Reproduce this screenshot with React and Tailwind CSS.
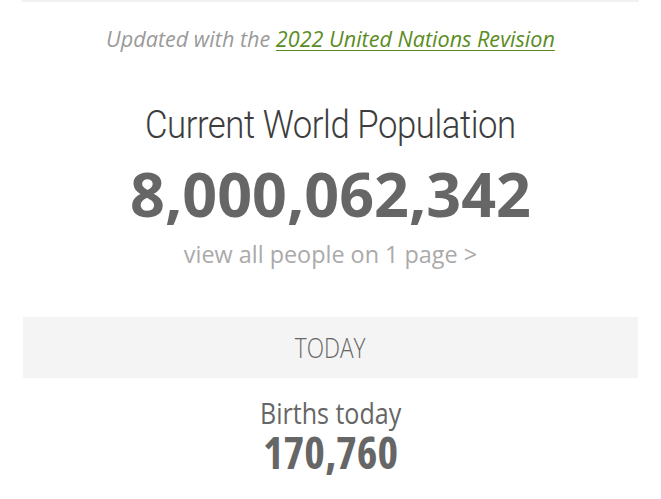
export default function App() {
  return (
    <div className="w-[661px] h-[499px] bg-white overflow-hidden font-['Open_Sans',sans-serif]">
      <div className="mx-[22px] h-[2px] bg-[#f1f1f1]"></div>

      <p className="mt-[22px] text-center text-[21.6px] leading-[30px] italic text-[#9a9a9a]">
        Updated with the{' '}
        <a href="#" className="text-[#5b8c1f] underline underline-offset-[3px] decoration-1">
          2022 United Nations Revision
        </a>
      </p>

      <div className="mt-[49px] text-center">
        <h1 className="font-['Roboto',sans-serif] font-light text-[39px] leading-[44px] text-[#3d3d3d]">
          <span className="inline-block scale-x-[0.89] tracking-[-0.5px]">Current World Population</span>
        </h1>
        <div className="mt-[5px] text-[61px] leading-[84px] font-bold text-[#666]">
          8,000,062,342
        </div>
        <div className="mt-[2px] text-[23.4px] leading-[32px] text-[#aaa]">
          view all people on 1 page &gt;
        </div>
      </div>

      <div className="mx-[23px] mt-[47px] h-[61px] bg-[#f4f4f4] flex items-center justify-center">
        <span className="inline-block scale-x-[0.84] text-[27px] leading-[38px] font-light text-[#666]">TODAY</span>
      </div>

      <div className="mt-[15px] text-center text-[#666]">
        <div className="text-[30px] leading-[40px]">
          <span className="inline-block scale-x-[0.835]">Births today</span>
        </div>
        <div className="mt-[2px] text-[44px] leading-[34px] font-bold font-stretch-condensed">170,760</div>
      </div>
    </div>
  )
}
